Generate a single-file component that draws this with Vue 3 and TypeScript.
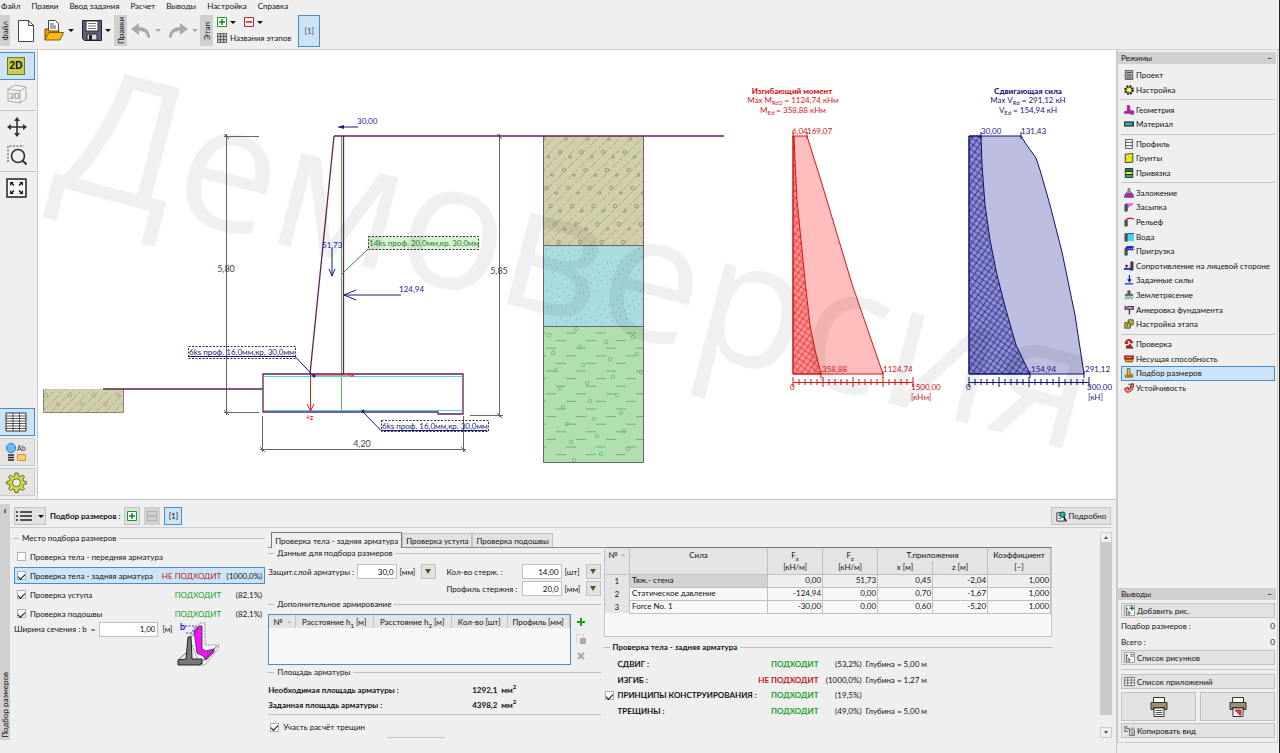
<script setup lang="ts">
import { ref } from 'vue'

interface NavItem { icon: string; label: string }
interface CheckRow { label: string; on: boolean; status: string; ok: boolean; percent: string }
interface ForceRow { n: number; name: string; values: string[] }
interface ResultRow { label: string; ok: boolean; status: string; percent: string; depth: string; check: boolean }

const menu = ['Файл', 'Правки', 'Ввод задания', 'Расчет', 'Выводы', 'Настройка', 'Справка']

const wall = '<path d="M1 11V3l2-2h7v1.500H5L4 4v7z" fill="#555" stroke="#222" stroke-width=".6"/>'
const icons: Record<string, string> = {
  project: '<path d="M1.500.500h9v11h-9z" fill="#b4b4b4" stroke="#444"/><path d="M3 3h6M3 9.500h6" stroke="#333"/><path d="M3 5h6v2.500H3z" fill="#777"/>',
  settings: '<circle cx="6" cy="6" r="4.800" fill="none" stroke="#222" stroke-width="2.200" stroke-dasharray="2.200 1.570"/><circle cx="6" cy="6" r="3.700" fill="#e8e21c" stroke="#222"/><circle cx="6" cy="6" r="1.500" fill="#f8f8e0"/>',
  geometry: '<path d="M4 .5h2.500L7.200 7h4.300v4H8v-1H.5V8L4 7.500z" fill="#d010d0" stroke="#401040" stroke-width=".6"/>',
  material: '<path d="M0 3.500h12v5H0z" fill="#367" stroke="#222"/><path d="M1.500 6h8" stroke="#30c8c8" stroke-width="2"/>',
  profile: '<path d="M2 .5h8v11H2zM2 4h8M2 8h8" fill="#fff" stroke="#333"/>',
  soils: '<path d="M1.500 1.500 10.500.5V11l-9 .5z" fill="#f2e81c" stroke="#222"/><path d="M5 4h1M7 6h1M4 8h1" stroke="#b09000"/>',
  assign: '<path d="M1.500.500h9v3.700h-9z" fill="#167a50" stroke="#123"/><path d="M1.500 4.200h9v3.600h-9z" fill="#f2e81c" stroke="#222"/><path d="M1.500 7.800h9v3.700h-9z" fill="#20a890" stroke="#123"/>',
  foundation: '<path d="M5 .5h2V4l2 1v2H3V5l2-1z" fill="#999" stroke="#444" stroke-width=".6"/><path d="M1.500 7h9l1.200 4.300H.3z" fill="#c020c0" stroke="#333" stroke-width=".6"/>',
  backfill: '<path d="M4 1.500h8L9 4.500 6 6l-2 4z" fill="#f060e8"/><path d="M1 11V3l3-1v9z" fill="#555" stroke="#222" stroke-width=".6"/>',
  terrain: '<path d="M1 11V4h3v7z" fill="#555" stroke="#222" stroke-width=".6"/><path d="M2 4 5 1.500h4l3 1" fill="none" stroke="#b02030" stroke-width="1.500"/>',
  water: '<path d="M4 3h8v8H4z" fill="#35dcf0"/><path d="M4 2h8" stroke="#1040c0" stroke-width="1.400"/><path d="M1 11V2h3v9z" fill="#555" stroke="#222" stroke-width=".6"/>',
  surcharge: wall + '<path d="M3 1h9M3 4.500h9M5 1v4M7.500 1v4M10 1v4" stroke="#1818d8" stroke-width="1.300"/>',
  resist: '<path d="M8 1h3v10H7V8h1z" fill="#345" stroke="#222" stroke-width=".5"/><path d="M0 9.500h7" stroke="#1818d8" stroke-width="2"/><path d="M3 4v4M5 5l-2 3-1.500-3" stroke="#d02030"/>',
  forces: '<path d="M6.500 0v6.500M4.500 5l2 3 2-3" stroke="#1818d8" stroke-width="1.400" fill="none"/><path d="M1 9.500h10v2H1z" fill="#4060d0"/>',
  quake: '<path d="M4.500 1h3v4h3v2h-9V5h3z" fill="#666" stroke="#222" stroke-width=".5"/><path d="m1 11 2-3 2 3 2-3 2 3 2-3" fill="none" stroke="#189840"/>',
  anchor: '<path d="M1.500 1v4H11V2H6L3 3M6.500 5v6.500" fill="none" stroke="#542060" stroke-width="1.600"/>',
  stage: '<path d="M5 1h6v6H5z" fill="#c8c832" stroke="#333"/><path d="M1 4.500h6.500V11H1z" fill="#c8c832" stroke="#333"/><path d="M4 6v3.500" stroke="#333"/>',
  verify: '<path d="M2 6C2 0 8 0 9 4M1 5h4M7 4h4" fill="none" stroke="#c81820" stroke-width="2.200"/><path d="M3 11V8h3l1-2 4 5z" fill="#c81820" stroke="#311" stroke-width=".7"/>',
  bearing: '<path d="M.5 2h11v4H.5z" fill="#c81820" stroke="#411" stroke-width=".5"/><path d="M1 6.500h10l-1 3H2z" fill="#e8a820" stroke="#411" stroke-width=".7"/><path d="M2 4h7" stroke="#f2d060"/>',
  sizing: '<path d="M4 .5h3V7l3.500 1v3h-9V8.500L4 8z" fill="#f0c818" stroke="#432" stroke-width=".8"/><path d="M4 9.500h5" stroke="#c02018" stroke-width="1.500"/>',
  stability: '<path d="M.5 7 5 5v3l2-1 2-6h2.500C12 7 8 12 3 11z" fill="#f0a090" stroke="#901818" stroke-width="1.200"/><path d="M5 1.500h4M7 7l3-4" stroke="#801818"/>',
  addpic: '<path d="M.5.500h11v11H.5z" fill="#fff" stroke="#999"/><path d="M2.500 2v8h4V8h-2V6M2.500 4h2" fill="none" stroke="#444"/><path d="M8.500 1v5M6 3.500h5" stroke="#108828" stroke-width="1.500"/>',
  pics: '<path d="M.5.500h11v11H.5z" fill="#fff" stroke="#999"/><path d="M2.500 2v8h4V8h-2V6M2.500 4h2" fill="none" stroke="#444"/><path d="M6.500 2.500h4.500M6.500 4.500h4.500" stroke="#666"/>',
  grid: '<path d="M.5 1.500h11v9H.5zM4 1.500v9M8 1.500v9M.5 4.500h11M.5 7.500h11" fill="#f8f8f8" stroke="#555" stroke-width=".8"/>',
  stages: '<path d="M.5.500h11v11H.5z" fill="#ccc" stroke="#444"/><path d="M4 1v10M8 1v10M1 4h10M1 8h10" stroke="#444"/>',
  copy: '<path d="M1 1v6h3M3 1v3h3v3" fill="none" stroke="#555"/><path d="M6 5.500h5.500v6H6z" fill="#e8e8e8" stroke="#666"/><path d="M8 3.500h3M7.500 8h3M7.500 10h3" stroke="#208838"/>',
  detail: '<path d="M1 2h8v9H1z" fill="#fff" stroke="#222"/><path d="M2.500 5h3M2.500 8h3" stroke="#444"/><circle cx="7" cy="4" r="3" fill="#20b8a8" stroke="#134"/><path d="m8.500 6.500 3 5" stroke="#222" stroke-width="1.600"/>',
}

const navGroups: NavItem[][] = [
  [{ icon: 'project', label: 'Проект' }, { icon: 'settings', label: 'Настройка' }],
  [{ icon: 'geometry', label: 'Геометрия' }, { icon: 'material', label: 'Материал' }],
  [{ icon: 'profile', label: 'Профиль' }, { icon: 'soils', label: 'Грунты' }, { icon: 'assign', label: 'Привязка' }],
  [
    { icon: 'foundation', label: 'Заложение' }, { icon: 'backfill', label: 'Засыпка' },
    { icon: 'terrain', label: 'Рельеф' }, { icon: 'water', label: 'Вода' },
    { icon: 'surcharge', label: 'Пригрузка' }, { icon: 'resist', label: 'Сопротивление на лицевой стороне' },
    { icon: 'forces', label: 'Заданные силы' }, { icon: 'quake', label: 'Землетрясение' },
    { icon: 'anchor', label: 'Анкеровка фундамента' }, { icon: 'stage', label: 'Настройка этапа' },
  ],
  [
    { icon: 'verify', label: 'Проверка' }, { icon: 'bearing', label: 'Несущая способность' },
    { icon: 'sizing', label: 'Подбор размеров' }, { icon: 'stability', label: 'Устойчивость' },
  ],
]
const activeMode = ref('Подбор размеров')

const checks = ref<CheckRow[]>([
  { label: 'Проверка тела - передняя арматура', on: false, status: '', ok: true, percent: '' },
  { label: 'Проверка тела - задняя арматура', on: true, status: 'НЕ ПОДХОДИТ', ok: false, percent: '(1000,0%)' },
  { label: 'Проверка уступа', on: true, status: 'ПОДХОДИТ', ok: true, percent: '(82,1%)' },
  { label: 'Проверка подошвы', on: true, status: 'ПОДХОДИТ', ok: true, percent: '(82,1%)' },
])
const activeCheck = ref(1)
const width = ref('1,00')
const cover = ref('30,0')
const barCount = ref('14,00')
const barSize = ref('20,0')
const cracks = ref(true)
const principles = ref(true)

const tabs = ['Проверка тела - задняя арматура', 'Проверка уступа', 'Проверка подошвы']
const activeTab = ref(0)

const forces: ForceRow[] = [
  { n: 1, name: 'Тяж.- стена', values: ['0,00', '51,73', '0,45', '-2,04', '1,000'] },
  { n: 2, name: 'Статическое давление', values: ['-124,94', '0,00', '0,70', '-1,67', '1,000'] },
  { n: 3, name: 'Force No. 1', values: ['-30,00', '0,00', '0,60', '-5,20', '1,000'] },
]
const results: ResultRow[] = [
  { label: 'СДВИГ :', ok: true, status: 'ПОДХОДИТ', percent: '(53,2%)', depth: 'Глубина = 5,00 м', check: false },
  { label: 'ИЗГИБ :', ok: false, status: 'НЕ ПОДХОДИТ', percent: '(1000,0%)', depth: 'Глубина = 1,27 м', check: false },
  { label: 'ПРИНЦИПЫ КОНСТРУИРОВАНИЯ :', ok: true, status: 'ПОДХОДИТ', percent: '(19,5%)', depth: '', check: true },
  { label: 'ТРЕЩИНЫ :', ok: true, status: 'ПОДХОДИТ', percent: '(49,0%)', depth: 'Глубина = 5,00 м', check: false },
]

// Soil hatches
const siltLines = Array.from({ length: 22 }, (_, i) => ({ x: 434 + i * 11 }))
const siltMarks: { x: number; y: number; r: number }[] = []
for (let row = 0; row < 7; row++) {
  for (let col = -2; col < 6; col++) {
    siltMarks.push({ x: 560 + row * 4 + col * 21.500, y: 152 + row * 18, r: 1.800 })
    siltMarks.push({ x: 566 + row * 4 + col * 21.500, y: 139 + row * 18, r: 1.300 })
  }
}
const sandDots: { x: number; y: number }[] = []
for (let i = 0; i < 130; i++) {
  sandDots.push({ x: 546 + ((i * 37) % 97), y: 249 + ((i * 23 + Math.floor(i / 7) * 5) % 76) })
}
const clayDashes: { x: number; y: number }[] = []
for (let row = 0; row < 17; row++) {
  for (let col = -1; col < 5; col++) {
    clayDashes.push({ x: 566 + col * 30 - (row % 3) * 10, y: 333 + row * 7.600 })
  }
}
const clayStones = [
  [549, 335], [606, 342], [580, 347], [553, 353], [610, 359], [637, 354], [583, 365], [556, 370], [613, 377],
  [587, 383], [560, 388], [617, 395], [590, 401], [563, 407], [621, 413], [594, 419], [567, 424], [624, 431],
  [597, 436], [571, 442], [628, 449], [601, 454], [574, 460], [576, 329], [633, 337], [641, 372],
]
const ticks = Array.from({ length: 21 }, (_, i) => ({ dx: i * 6, h: i % 5 === 0 ? 5 : 3 }))
const tickPath = (x0: number) => ticks.map(t => `M${x0 + t.dx} ${382 - t.h}v${t.h * 2}`).join('')
</script>

<template>
  <div class="app">
    <nav class="menu">
      <a v-for="m in menu" :key="m" href="#">{{ m }}</a>
    </nav>

    <header class="toolbar">
      <span class="vtab first"><span>Файл</span></span>
      <button class="tool new" aria-label="Новый">
        <svg width="16" height="22" viewBox="0 0 16 22"><path d="M.5.500h10l5 5v16H.5z" fill="#fff" stroke="#444" /><path d="M10.500.500v5h5" fill="none" stroke="#444" /></svg>
      </button>
      <button class="tool open" aria-label="Открыть">
        <svg width="20" height="21" viewBox="0 0 20 21"><path d="M4.500.500h7l3 3V13h-10z" fill="#fff" stroke="#444" /><path d="M6 4h4M6 6h6M6 8h6" stroke="#555" /><path d="M1 20V9h3l1 2h10v3" fill="#e89c08" stroke="#6a4a00" /><path d="M1 20 5 12.500h14.500L16 20z" fill="#fdbb18" stroke="#8a5a00" /></svg>
      </button>
      <button class="drop" aria-label="Недавние файлы"><i class="caret"></i></button>
      <button class="tool save" aria-label="Сохранить">
        <svg width="20" height="21" viewBox="0 0 20 21"><path d="M.5.500h19v20H2.500l-2-2z" fill="#5e5e7e" stroke="#222" /><path d="M4 1h12v10H4z" fill="#fff" stroke="#333" /><path d="M6 3.500h8M6 6h8M6 8.500h8" stroke="#777" /><path d="M5 14h10v6H5z" fill="#ddd" stroke="#222" /><path d="M7 15h3v5H7z" fill="#223" /></svg>
      </button>
      <button class="drop" aria-label="Варианты сохранения"><i class="caret"></i></button>
      <span class="vtab"><span>Правки</span></span>
      <button class="tool undo" aria-label="Отменить">
        <svg width="20" height="16" viewBox="0 0 20 16"><path d="M0 6 8 0v4c7 0 11 4 11 11l-3-1c0-4-3-6-8-6v4z" fill="#a9a9a9" /></svg>
      </button>
      <button class="drop" aria-label="История отмен"><i class="caret dim"></i></button>
      <button class="tool redo" aria-label="Повторить">
        <svg width="20" height="16" viewBox="0 0 20 16"><path d="m20 6-8-6v4C5 4 1 8 1 15l3-1c0-4 3-6 8-6v4z" fill="#a9a9a9" /></svg>
      </button>
      <button class="drop" aria-label="История повторов"><i class="caret dim"></i></button>
      <span class="vtab stage"><span>Этап</span></span>
      <div class="stagebox">
        <div class="stagebtns">
          <button class="bare" aria-label="Добавить этап"><svg width="10" height="10" viewBox="0 0 10 10"><path d="M.5.500h9v9h-9z" fill="#fff" stroke="#189828" /><path d="M5 2v6M2 5h6" stroke="#108820" stroke-width="1.500" /></svg></button>
          <i class="caret"></i>
          <button class="bare second" aria-label="Удалить этап"><svg width="10" height="10" viewBox="0 0 10 10"><path d="M.5.500h9v9h-9z" fill="#fff" stroke="#c02028" /><path d="M2 5h6" stroke="#b81820" stroke-width="1.500" /></svg></button>
          <i class="caret"></i>
        </div>
        <button class="bare names"><svg width="10" height="10" viewBox="0 0 12 12" v-html="icons.stages"></svg>Названия этапов</button>
      </div>
      <button class="stagetab">[1]</button>
    </header>

    <aside class="left">
      <button class="side on" aria-label="2D"><span class="two">2D</span></button>
      <button class="side flat" aria-label="3D">
        <svg width="20" height="20" viewBox="0 0 20 20"><path d="M1 5 8 1l11 2v12l-6 4-12-2z" fill="#f3f3f3" stroke="#aaa" /><path d="m1 5 12 2v12M13 7l6-4" fill="none" stroke="#aaa" /><text x="2" y="15" font-size="8" font-weight="700" fill="#999">3D</text></svg>
      </button>
      <hr>
      <button class="side flat" aria-label="Сдвиг">
        <svg width="20" height="20" viewBox="0 0 20 20"><path d="M10 1v18M1 10h18" stroke="#333" stroke-width="1.600" /><path d="m10 0 3 4H7zM10 20l3-4H7zM0 10l4-3v6zM20 10l-4-3v6z" fill="#333" /></svg>
      </button>
      <button class="side flat" aria-label="Увеличить область">
        <svg width="20" height="20" viewBox="0 0 20 20"><path d="M1 17V1h16" fill="none" stroke="#444" stroke-dasharray="2 1.500" /><circle cx="11" cy="11" r="6.500" fill="none" stroke="#333" stroke-width="1.600" /><path d="m15.500 15.500 4 4" stroke="#333" stroke-width="2" /></svg>
      </button>
      <hr>
      <button class="side flat" aria-label="Показать всё">
        <svg width="21" height="20" viewBox="0 0 21 20"><path d="M1 1h19v18H1z" fill="#f8f8f8" stroke="#222" stroke-width="1.500" /><path d="M4 4h4L6.700 5.300 8.500 7l-1 1-2-1.700L4 8zM17 4h-4l1.300 1.300L12.500 7l1 1 2-1.700L17 8zM4 16h4l-1.300-1.300L8.500 13l-1-1-2 1.700L4 12zM17 16h-4l1.300-1.300-1.800-1.700 1-1 2 1.700L17 12z" fill="#222" /></svg>
      </button>
      <div class="grow"></div>
      <button class="side on" aria-label="Таблица">
        <svg width="22" height="20" viewBox="0 0 22 20"><path d="M1 1h20v18H1z" fill="#fff" stroke="#333" /><path d="M1 4h20M1 6.500h20M1 9h20M1 11.500h20M1 14h20M1 16.500h20M8 1v18M14.500 1v18" stroke="#444" stroke-width=".9" /></svg>
      </button>
      <button class="side box" aria-label="Подписи">
        <svg width="20" height="20" viewBox="0 0 20 20"><circle cx="5" cy="6" r="4.600" fill="#6cb8f0" stroke="#3a80b8" /><path d="M2 13h6M2 15.500h6M2 18h6" stroke="#222" stroke-width="1.300" /><path d="M11.500 12.500h8v6h-8z" fill="#fcd078" stroke="#e09020" /><text x="11" y="9" font-size="7" fill="#333">Ab</text></svg>
      </button>
      <button class="side box" aria-label="Настройка">
        <svg width="21" height="21" viewBox="0 0 21 21"><path d="M9 1h3l.5 3 1.700.700L16.700 3 18.500 5l-1.700 2.300.7 1.700 2.800.5v2.500l-2.800.500-.7 1.700 1.700 2.500-2 2-2.300-1.700-1.700.700-.5 2.800H9l-.5-2.800-1.700-.700L4.500 18.500l-2-2 1.700-2.500-.7-1.700L.7 12V9.500L3.500 9l.7-1.700L2.500 5l2-2 2.300 1.700L8.500 4z" fill="#d3d84e" stroke="#666a20" /><circle cx="10.500" cy="10.700" r="4" fill="#efefef" stroke="#666a20" /></svg>
      </button>
    </aside>

    <main class="canvas">
      <svg class="drawing" viewBox="38 50 1078 449" role="img" aria-label="Подпорная стена">
        <defs>
          <pattern id="hatchRed" width="5" height="5" patternUnits="userSpaceOnUse" patternTransform="rotate(35)">
            <path d="M0 0h5M0 0v5" stroke="#e01818" stroke-width="1.200" />
          </pattern>
          <pattern id="hatchBlue" width="5" height="5" patternUnits="userSpaceOnUse" patternTransform="rotate(35)">
            <path d="M0 0h5M0 0v5" stroke="#101070" stroke-width="1.200" />
          </pattern>
          <clipPath id="silt"><path d="M544 136h100v110H544z" /></clipPath>
          <clipPath id="clay"><path d="M544 327h100v136H544z" /></clipPath>
          <clipPath id="ground"><path d="M43 389h81v23H43z" /></clipPath>
        </defs>

        <!-- soil profile -->
        <path d="M544 136h100v110H544z" fill="#d0ceab" />
        <g clip-path="url(#silt)" stroke="#9d9c78" fill="none" stroke-width=".7">
          <path v-for="l in siltLines" :key="l.x" :d="`M${l.x} 247l111-111`" stroke-dasharray="9 2 3 2" />
          <circle v-for="(m, i) in siltMarks" :key="'m' + i" :cx="m.x" :cy="m.y" :r="m.r" stroke="#85845c" />
        </g>
        <path d="M544 246h100v81H544z" fill="#a9dcdf" />
        <path v-for="(d, i) in sandDots" :key="'s' + i" :d="`M${d.x} ${d.y}h1`" stroke="#6ba5b0" />
        <path d="M544 327h100v136H544z" fill="#b0e0b0" />
        <g clip-path="url(#clay)" stroke="#6fb374" fill="none">
          <path v-for="(d, i) in clayDashes" :key="'c' + i" :d="`M${d.x} ${d.y}h10`" />
          <circle v-for="(s, i) in clayStones" :key="'k' + i" :cx="s[0]" :cy="s[1]" r="1.800" stroke-width=".8" />
        </g>
        <path d="M543.500 136v326.500h100V136M543.500 245.500h100M543.500 326.500h100" fill="none" stroke="#6f5f78" />
        <path d="M43 389h81v23H43z" fill="#d0ceab" />
        <g clip-path="url(#ground)" stroke="#9d9c78" fill="none" stroke-width=".7">
          <path v-for="k in 12" :key="k" :d="`M${14 + k * 9} 413l25-25`" stroke-dasharray="9 2 3 2" />
          <circle v-for="k in 7" :key="'g' + k" :cx="34 + k * 12" :cy="k % 2 ? 395 : 404" r="1.800" />
        </g>
        <path d="M43.500 389v23.500h80V389" fill="none" stroke="#8c7f80" />

        <!-- diagrams -->
        <path d="M793 136h14l15 48 30 100 31 90h-90z" fill="#ffbdbd" />
        <path d="M793 136h1l1 24 2 40 5 50 4 40 4 35 5 25 6 24h-28z" fill="#ff9090" />
        <path d="M793 136h1l1 24 2 40 5 50 4 40 4 35 5 25 6 24h-28z" fill="url(#hatchRed)" stroke="#d01818" />
        <path d="M793 136h14l15 48 30 100 31 90h-90z" fill="none" stroke="#d01818" />
        <path d="M969 136h52l5 8 10 14 4 12 10 35 12 47 13 63 9 59H969z" fill="#bdbddf" />
        <path d="M969 136h12l1 29 3 40 5 35 7 35 9 35 10 35 14 29H969z" fill="#8c8cd0" />
        <path d="M969 136h12l1 29 3 40 5 35 7 35 9 35 10 35 14 29H969z" fill="url(#hatchBlue)" stroke="#101078" />
        <path d="M969 136h52l5 8 10 14 4 12 10 35 12 47 13 63 9 59H969z" fill="none" stroke="#101078" />
        <path :d="'M793 382.500h120' + tickPath(793) + 'M793 132v7M807 132v7M821 371v7M883 371v7'" stroke="#d01818" />
        <path :d="'M969 382.500h120' + tickPath(969) + 'M981 132v7M1021 132v7M1030 371v7M1084 371v7'" stroke="#101078" />
        <g class="red">
          <text x="792" y="94" text-anchor="middle" class="b">Изгибающий момент</text>
          <text x="793" y="103" text-anchor="middle">Max M<tspan class="sub" dy="2">Rd2</tspan><tspan dy="-2"> = 1124,74 кНм</tspan></text>
          <text x="793" y="113" text-anchor="middle">M<tspan class="sub" dy="2">Ed</tspan><tspan dy="-2"> = 358,88 кНм</tspan></text>
          <text x="792" y="134">6,04</text><text x="807" y="134">169,07</text>
          <text x="822" y="372">358,88</text><text x="883" y="372">1124,74</text>
          <text x="790" y="390">0</text><text x="911" y="390">1500,00</text><text x="911" y="400">[кНм]</text>
        </g>
        <g class="blue">
          <text x="1028" y="94" text-anchor="middle" class="b">Сдвигающая сила</text>
          <text x="1028" y="103" text-anchor="middle">Max V<tspan class="sub" dy="2">Rd</tspan><tspan dy="-2"> = 291,12 кН</tspan></text>
          <text x="1028" y="113" text-anchor="middle">V<tspan class="sub" dy="2">Ed</tspan><tspan dy="-2"> = 154,94 кН</tspan></text>
          <text x="981" y="134">30,00</text><text x="1021" y="134">131,43</text>
          <text x="1031" y="372">154,94</text><text x="1085" y="372">291,12</text>
          <text x="966" y="390">0</text><text x="1087" y="390">300,00</text><text x="1088" y="400">[кН]</text>
        </g>

        <!-- dimensions -->
        <g stroke="#666" fill="none">
          <path d="M226.500 134v281M224 136.500h35M224 412.500h35M499.500 134v283M470 415.500h33M260 449.500h206M262.500 416v36M463.500 416v36" />
          <path d="m224 134 5 5M224 410l5 5M497 134l5 5M497 413l5 5M260 447l5 5M461 447l5 5" />
        </g>
        <g class="dim" text-anchor="middle">
          <text x="226" y="272">5,80</text><text x="499" y="274">5,85</text><text x="362" y="447">4,20</text>
        </g>

        <!-- wall -->
        <path d="M341.500 136v276" stroke="#57b857" />
        <path d="M264 376.500h198M264 410.500h198" stroke="#45d5ef" />
        <g fill="none" stroke="#5c2458" stroke-width="1.300">
          <path d="M334 136h390M334 136l-24 238M343.500 136v238M103 389h160" />
          <path d="M263 374h200v40h-25v-2H263z" />
        </g>
        <path d="M310.500 375v36M307 404l3.500 7 3.500-7M311 375h42" stroke="#e02020" fill="none" />
        <g class="axis"><text x="347" y="377">+x</text><text x="306" y="420">+z</text></g>

        <!-- loads -->
        <path d="M338 127h20M332 248v28m-3-7 3 7 3-7M344 295h57M356 290l-12 5 12 5" fill="none" stroke="#181880" />
        <path d="m338 127 6-2v4z" fill="#181880" />
        <g class="load">
          <text x="357" y="124">30,00</text><text x="322" y="248">51,73</text><text x="399" y="292">124,94</text>
        </g>
        <path d="M368.500 236.500h110v13h-110z" fill="#d9f2d5" stroke="#333" stroke-dasharray="2 1.500" />
        <path d="M342 274l26-25" stroke="#2c8c2c" />
        <text x="369" y="246" class="green">14ks проф. 20,0мм,кр. 30,0мм</text>
        <path d="M188.500 346.500h107v12h-107zM381.500 420.500h107v11h-107z" fill="none" stroke="#333" stroke-dasharray="2 1.500" />
        <path d="M189 356.500h106l19 20M363 412l18 18.500h106" fill="none" stroke="#181880" />
        <circle cx="314" cy="376" r="1.500" fill="#181880" /><circle cx="363" cy="411" r="1.500" fill="#181880" />
        <g class="blue"><text x="189" y="355">6ks проф. 16,0мм,кр. 30,0мм</text><text x="382" y="429">6ks проф. 16,0мм,кр. 30,0мм</text></g>

        <text class="mark" transform="translate(50 185) rotate(14.6)">Демоверсия</text>
      </svg>
    </main>

    <section class="bottom">
      <div class="strip"><b>ı</b><span>Подбор размеров</span></div>
      <div class="work">
        <div class="bar">
          <button class="gray list" aria-label="Список"><svg width="16" height="10" viewBox="0 0 16 10"><path d="M0 1h2M0 5h2M0 9h2M4 1h12M4 5h12M4 9h12" stroke="#222" stroke-width="1.600" /></svg><i class="caret"></i></button>
          <b>Подбор размеров :</b>
          <button class="gray sq" aria-label="Добавить"><svg width="10" height="10" viewBox="0 0 10 10"><path d="M.5.500h9v9h-9z" fill="#fff" stroke="#189828" /><path d="M5 2v6M2 5h6" stroke="#108820" stroke-width="1.500" /></svg></button>
          <button class="gray sq off" aria-label="Удалить" disabled><svg width="10" height="10" viewBox="0 0 10 10"><path d="M.5.500h9v9h-9z" fill="none" stroke="#b0b0b0" /><path d="M2 5h6" stroke="#aaa" stroke-width="1.500" /></svg></button>
          <button class="gray one">[1]</button>
          <button class="gray detail"><svg width="11" height="11" viewBox="0 0 12 12" v-html="icons.detail"></svg>Подробно</button>
        </div>

        <div class="cols">
          <div class="col place">
            <h3 class="legend">Место подбора размеров</h3>
            <div v-for="(c, i) in checks" :key="c.label" class="check" :class="{ active: i === activeCheck }">
              <label><input v-model="c.on" type="checkbox">{{ c.label }}</label>
              <span class="status" :class="c.ok ? 'ok' : 'bad'">{{ c.status }}</span>
              <span class="pct">{{ c.percent }}</span>
            </div>
            <div class="widthrow">
              <label for="width">Ширина сечения : b&nbsp; =</label>
              <input id="width" v-model="width" class="num" type="text">
              <span>[м]</span>
              <svg width="44" height="45" viewBox="0 0 44 45">
                <path d="M12 15 23 1h5v22h14l-1 4-13 16h-5z" fill="#f4f4f4" stroke="#777" stroke-width=".8" stroke-dasharray="2 1" />
                <path d="m17 9 5-5h3v23l4 2 8-2v3l-8 8-3-4-6-3z" fill="#f018f0" stroke="#402040" stroke-width=".8" />
                <path d="M11 15h3l1 22h10v5h-2v1H1v-5l8-1z" fill="#777" stroke="#222" />
                <path d="m1 38 8-7M26 39l14-15M14 15l8-9" stroke="#444" stroke-width=".8" />
                <path d="M9 11h5l5-7M8 4h12" fill="none" stroke="#3030d0" stroke-dasharray="2 1.500" />
                <text x="3" y="8" font-size="9" font-weight="700" fill="#1818d0">b</text>
              </svg>
            </div>
          </div>

          <div class="col middle">
            <div class="tabs">
              <button v-for="(t, i) in tabs" :key="t" :class="{ active: i === activeTab }" @click="activeTab = i">{{ t }}</button>
            </div>
            <h3 class="legend data">Данные для подбора размеров</h3>
            <div class="fields">
              <label for="cover">Защит.слой арматуры :</label>
              <input id="cover" v-model="cover" class="num" type="text">
              <span>[мм]</span><button class="pick" aria-label="Выбрать слой"><i></i></button>
              <label for="count">Кол-во стерж. :</label>
              <input id="count" v-model="barCount" class="num" type="text">
              <span>[шт]</span><button class="pick" aria-label="Выбрать количество"><i></i></button>
              <label for="size" class="later">Профиль стержня :</label>
              <input id="size" v-model="barSize" class="num" type="text">
              <span>[мм]</span><button class="pick" aria-label="Выбрать профиль"><i></i></button>
            </div>
            <h3 class="legend extra">Дополнительное армирование</h3>
            <div class="extras">
              <div class="extrabox">
                <table>
                  <colgroup><col class="e1"><col class="e2"><col class="e2"><col class="e3"><col></colgroup>
                  <thead><tr><th>№ <i class="sort"></i></th><th>Расстояние h<sub>1</sub> [м]</th><th>Расстояние h<sub>2</sub> [м]</th><th>Кол-во [шт]</th><th>Профиль [мм]</th></tr></thead>
                </table>
              </div>
              <div class="ops">
                <button class="bare" aria-label="Добавить строку"><svg width="10" height="10" viewBox="0 0 10 10"><path d="M5 1v8M1 5h8" stroke="#18a018" stroke-width="2" /></svg></button>
                <button class="bare" aria-label="Копировать строку"><svg width="10" height="10" viewBox="0 0 10 10"><path d="M.5.500h7v7h-7z" fill="none" stroke="#bbb" stroke-dasharray="1 1" /><path d="M4 4h6v6H4z" fill="#aaa" /></svg></button>
                <button class="bare" aria-label="Удалить строку"><svg width="10" height="10" viewBox="0 0 10 10"><path d="m2 2 6 6M8 2 2 8" stroke="#a8a8a8" stroke-width="2" /></svg></button>
              </div>
            </div>
            <h3 class="legend area">Площадь арматуры</h3>
            <dl>
              <dt>Необходимая площадь арматуры :</dt><dd>1292,1</dd><dd>мм<sup>2</sup></dd>
              <dt>Заданная площадь арматуры :</dt><dd>4398,2</dd><dd>мм<sup>2</sup></dd>
            </dl>
            <label class="cracks"><input v-model="cracks" type="checkbox">Участь расчёт трещин</label>
            <div class="grip"></div>
          </div>

          <div class="col right">
            <div class="forcebox">
              <table class="forces">
                <colgroup><col class="c1"><col class="c2"><col class="c3"><col class="c3"><col class="c3"><col class="c3"><col class="c4"></colgroup>
                <thead>
                  <tr><th>№ <i class="sort"></i></th><th>Сила</th><th>F<sub>x</sub></th><th>F<sub>z</sub></th><th colspan="2">Т.приложения</th><th>Коэффициент</th></tr>
                  <tr class="units"><th></th><th></th><th>[кН/м]</th><th>[кН/м]</th><th>x [м]</th><th>z [м]</th><th>[–]</th></tr>
                </thead>
                <tbody>
                  <tr v-for="(f, i) in forces" :key="f.n" :class="{ sel: i === 0 }">
                    <th>{{ f.n }}</th><td class="name">{{ f.name }}</td><td v-for="(v, k) in f.values" :key="k">{{ v }}</td>
                  </tr>
                </tbody>
              </table>
            </div>
            <h3 class="legend bold">Проверка тела - задняя арматура</h3>
            <div class="results">
              <div v-for="r in results" :key="r.label" class="result">
                <label><input v-if="r.check" v-model="principles" type="checkbox"><i v-else></i>{{ r.label }}</label>
                <b :class="r.ok ? 'ok' : 'bad'">{{ r.status }}</b>
                <span class="p">{{ r.percent }}</span>
                <span>{{ r.depth }}</span>
              </div>
            </div>
          </div>

          <div class="scroll">
            <button aria-label="Вверх"><i class="up"></i></button>
            <div class="track"><div class="thumb"></div></div>
            <button aria-label="Вниз"><i class="down"></i></button>
          </div>
        </div>
      </div>
    </section>

    <aside class="modes">
      <h2>Режимы<span>–</span></h2>
      <nav>
        <template v-for="(g, gi) in navGroups" :key="gi">
          <hr v-if="gi">
          <a v-for="n in g" :key="n.label" href="#" :class="{ active: n.label === activeMode }" @click.prevent="activeMode = n.label">
            <svg width="10" height="10" viewBox="0 0 12 12" v-html="icons[n.icon]"></svg>{{ n.label }}
          </a>
        </template>
      </nav>
      <div class="grow"></div>
      <h2>Выводы<span>–</span></h2>
      <div class="outputs">
        <button class="gray"><svg width="11" height="11" viewBox="0 0 12 12" v-html="icons.addpic"></svg>Добавить рис.</button>
        <p><span>Подбор размеров :</span><span>0</span></p>
        <p><span>Всего :</span><span>0</span></p>
        <button class="gray"><svg width="11" height="11" viewBox="0 0 12 12" v-html="icons.pics"></svg>Список рисунков</button>
        <hr>
        <button class="gray"><svg width="11" height="11" viewBox="0 0 12 12" v-html="icons.grid"></svg>Список приложений</button>
        <div class="printers">
          <button v-for="p in 2" :key="p" class="gray" :aria-label="p === 1 ? 'Печать документа' : 'Печать вида'">
            <svg width="18" height="20" viewBox="0 0 18 20"><path d="M3.500.500h11V6h-11z" fill="#fff" stroke="#333" /><path d="M1 5.500h16v7H1z" fill="#a09070" stroke="#333" /><path d="M3 11h12" stroke="#222" stroke-width="1.500" /><path d="M4 11h10v8.500H4z" fill="#fff" stroke="#333" /><path v-if="p === 1" d="M5.500 13.500h7M5.500 15.500h7M5.500 17.500h7" stroke="#555" /><path v-else d="M6 13h6v5h-1.500z" fill="#e04040" stroke="#c02020" /></svg>
          </button>
        </div>
        <button class="gray"><svg width="11" height="11" viewBox="0 0 12 12" v-html="icons.copy"></svg>Копировать вид</button>
      </div>
    </aside>
  </div>
</template>

<style>
body { margin: 0; background: #efefef; }
</style>

<style scoped>
* { box-sizing: border-box; }
.app {
  display: grid;
  grid-template-columns: 38px minmax(0, 1fr) 162px;
  grid-template-rows: 14px 36px minmax(0, 1fr) auto;
  min-height: 100vh;
  background: #efefef;
  border-right: 1px solid #222;
  color: #111;
  font: 8px/12px Lato, "Open Sans", sans-serif;
}
button, input { font: inherit; color: inherit; }
button { padding: 0; margin: 0; border: 0; background: none; display: flex; align-items: center; justify-content: center; }
a { color: inherit; text-decoration: none; }
h2, h3, p, dl, dd { margin: 0; font-weight: 400; font-size: 8px; }
dd { font-weight: 700; }
hr { width: 100%; height: 1px; margin: 0; border: 0; background: #c4c4c4; }
svg { display: block; flex: none; }
.grow { flex: 1; }
.ok { color: #18a02c; }
.bad { color: #c01424; }

.menu { grid-column: 1 / -1; display: flex; gap: 11px; padding-left: 1px; line-height: 12px; }
.toolbar { grid-column: 1 / -1; display: flex; align-items: center; border-bottom: 1px solid #d0d0d0; padding-bottom: 2px; }
.vtab { width: 13px; height: 31px; background: #d0d0d0; display: flex; align-items: center; justify-content: center; }
.vtab.first { width: 10px; }
.vtab span { writing-mode: vertical-rl; transform: rotate(180deg); line-height: 12px; }
.tool { height: 31px; }
.new { margin-left: 8px; }
.open { margin-left: 10px; }
.save { margin-left: 4px; }
.undo { margin-left: 4px; }
.redo { margin-left: 3px; }
.drop { width: 14px; height: 31px; }
.toolbar .save + .drop { width: 12px; }
.vtab.stage { margin-left: -2px; }
.caret { width: 0; height: 0; border: 3px solid transparent; border-top-color: #111; border-bottom: 0; }
.caret.dim { border-top-color: #aaa; }
.stagebox { margin-left: 4px; display: flex; flex-direction: column; align-items: flex-start; gap: 3px; }
.stagebtns { display: flex; align-items: center; gap: 3px; height: 12px; }
.second { margin-left: 5px; }
.names { gap: 3px; height: 14px; }
.stagetab { margin-left: 7px; width: 22px; height: 32px; border: 1px solid #4a8cc4; background: #cce4f7; color: #345; }

.left { grid-row: 3; display: flex; flex-direction: column; align-items: flex-start; padding: 2px 2px 3px 0; border-right: 1px solid #c8c8c8; }
.left hr { margin: 2px 0; width: 35px; }
.side { width: 35px; height: 28px; padding-right: 2px; flex: none; }
.side.on { border: 1px solid #4a8cc4; border-left: 0; background: #cce4f7; }
.side.box { margin-top: 2px; border: 1px solid #ccc; border-left: 0; background: #e4e4e4; }
.two { width: 18px; height: 18px; border: 1px solid #77772a; background: #c9cc4c; font: 700 10px/16px "Liberation Sans", sans-serif; color: #111; }

.canvas { grid-row: 3; grid-column: 2; background: #fff; border-right: 1px solid #c8c8c8; min-height: 0; }
.drawing { width: 100%; height: auto; font-size: 8px; }
.drawing .red { fill: #d01818; }
.drawing .blue { fill: #181880; }
.drawing .load { fill: #1c1ca8; }
.drawing .green { fill: #208020; }
.drawing .b { font-weight: 900; }
.drawing .sub { font-size: 6px; }
.drawing .dim { fill: #444; font-size: 9px; }
.drawing .axis { fill: #e02020; font-weight: 700; font-size: 7px; }
.drawing .mark { font-family: "Open Sans", sans-serif; font-size: 177px; fill: #000; fill-opacity: .06; }

.bottom { grid-row: 4; grid-column: 1 / 3; display: flex; border-top: 1px solid #c4c4c4; border-right: 1px solid #c8c8c8; padding: 4px 4px 13px 0; }
.strip { width: 10px; background: #d0d0d0; display: flex; flex-direction: column; justify-content: space-between; align-items: center; padding-bottom: 2px; }
.strip b { font-size: 8px; }
.strip span { writing-mode: vertical-rl; transform: rotate(180deg); line-height: 10px; white-space: nowrap; }
.work { flex: 1; min-width: 0; display: flex; flex-direction: column; }
.bar { display: flex; align-items: center; gap: 4px; padding: 3px 1px 2px 4px; border-bottom: 1px solid #ccc; }
.gray { border: 1px solid #c2c2c2; background: #e2e2e2; }
.list { width: 32px; height: 18px; gap: 6px; }
.sq { width: 16px; height: 18px; }
.sq.off { background: #d0d0d0; border-color: #d0d0d0; }
.one { width: 18px; height: 18px; background: #cce4f7; border-color: #4a8cc4; }
.detail { margin-left: auto; height: 18px; width: 60px; gap: 2px; }
.cols { flex: 1; display: grid; grid-template-columns: minmax(0, 252fr) minmax(0, 338fr) minmax(0, 448fr) minmax(0, 60fr); padding-left: 3px; }
.legend { display: flex; align-items: center; gap: 3px; height: 10px; line-height: 10px; white-space: nowrap; }
.legend::before { content: ""; width: 6px; height: 1px; background: #bdbdbd; }
.legend::after { content: ""; flex: 1; height: 1px; background: #bdbdbd; }
.legend.bold { font-weight: 700; }
.place { padding-top: 5px; }
.check { display: flex; align-items: center; height: 17px; margin-top: 2px; padding-right: 2px; margin-left: 1px; border: 1px solid transparent; }
.place .legend { margin-bottom: 5px; }
.check.active { border-color: #4a8cc4; background: #cce4f7; }
.check label { flex: 1; display: flex; align-items: center; white-space: nowrap; }
.check .pct { width: 41px; text-align: right; }
input[type="checkbox"] { appearance: none; width: 9px; height: 9px; margin: 0 4px 0 2px; border: 1px solid #b0b0b0; background: #fff; display: inline-flex; align-items: center; justify-content: center; flex: none; }
input[type="checkbox"]:checked::after { content: ""; width: 6px; height: 3px; border: solid #111; border-width: 0 0 1px 1px; transform: rotate(-45deg); }
.num { min-width: 0; height: 15px; border: 1px solid #c0c0c0; background: #fff; text-align: right; padding: 0 2px; border-radius: 0; }
.widthrow { display: flex; align-items: flex-start; gap: 4px; line-height: 15px; white-space: nowrap; padding-left: 1px; }
.widthrow .num { width: 59px; }

.middle { padding: 4px 3px 2px 3px; }
.tabs { display: flex; align-items: flex-end; padding-left: 3px; border-bottom: 1px solid #888; margin-right: -3px; }
.tabs button { height: 14px; padding: 0 3px; border: 1px solid #c2c2c2; border-bottom: 0; background: #e2e2e2; white-space: nowrap; }
.tabs .active { height: 16px; background: #efefef; border-color: #777; margin-bottom: -1px; }
.fields { display: grid; grid-template-columns: minmax(0, 1fr) 40px 18px 15px 80px 40px 18px 15px; gap: 2px 3px; align-items: center; margin-top: 6px; white-space: nowrap; }
.fields label:nth-of-type(n + 2) { padding-left: 8px; }
.fields .later { grid-column: 5; }
.pick { height: 15px; border: 1px solid #c2c2c2; background: #e2e2e2; }
.pick i { border: 3px solid transparent; border-top: 5px solid #55551a; border-bottom: 0; }
.extra { margin-top: 3px; }
.extras { display: flex; margin-top: 5px; gap: 5px; }
.extrabox { flex: 1; height: 51px; border: 1px solid #4a8cc4; background: #f8f8f8; }
table { border-collapse: collapse; width: 100%; table-layout: fixed; }
.e1 { width: 26px; }
.e2 { width: 78px; }
.e3 { width: 56px; }
th { font-weight: 400; padding: 0; }
sub, sup { font-size: 6px; line-height: 0; }
.extrabox th { height: 13px; line-height: 12px; background: #e4e4e4; border-right: 1px solid #c4c4c4; white-space: nowrap; }
.sort { display: inline-block; border: 2px solid transparent; border-bottom-color: #aaa; border-top: 0; vertical-align: middle; margin-left: 2px; }
.ops { width: 25px; display: flex; flex-direction: column; align-items: flex-start; gap: 7px; padding: 3px 0 0 0; }
.area { margin-top: 2px; }
dl { display: grid; grid-template-columns: 200px 25px 1fr; gap: 0 4px; font-weight: 700; line-height: 15px; padding: 6px 0 1px; border-bottom: 1px solid #c4c4c4; }
.cracks { display: flex; align-items: center; margin-top: 6px; }
.grip { width: 58px; height: 1px; background: #c4c4c4; margin: 4px 0 0 119px; }

.right { padding-top: 19px; }
.forcebox { height: 90px; border: 1px solid #c4c4c4; border-top-color: #777; background: #f8f8f8; }
.c1 { width: 25px; }
.c2 { width: 138px; }
.c3 { width: 55px; }
.c4 { width: 63px; }
.forces thead th { background: #e4e4e4; height: 13px; line-height: 12px; border-right: 1px solid #c0c0c0; }
.forces thead .units th { border-bottom: 1px solid #c0c0c0; }
.forces tbody th { background: #e4e4e4; border-right: 1px solid #c0c0c0; }
.forces td { text-align: right; border: 1px solid #c0c0c0; padding: 0 1px; height: 13px; line-height: 11px; }
.forces .name { text-align: left; padding-left: 2px; }
.forces .sel td { background: #efefef; }
.forces .sel .name { background: #d2d2d2; }
.right .legend { margin-top: 5px; }
.results { padding-top: 5px; line-height: 15px; }
.result { display: grid; grid-template-columns: 140px 74px 42px 1fr; gap: 0 1px; height: 15px; margin-bottom: 1px; white-space: nowrap; }
.result:nth-child(even) { margin-bottom: 0; }
.result label { font-weight: 700; display: flex; align-items: center; }
.result label input { margin-left: 1px; }
.result label i { width: 14px; }
.result b, .result .p { text-align: right; }
.result span:last-child { padding-left: 3px; }
.scroll { display: flex; flex-direction: column; width: 12px; margin: 4px 0 2px auto; }
.scroll button { height: 11px; border: 1px solid #ccc; }
.up { border: 2px solid transparent; border-bottom: 3px solid #555; border-top: 0; }
.down { border: 2px solid transparent; border-top: 3px solid #555; border-bottom: 0; }
.track { flex: 1; padding-bottom: 12px; display: flex; }
.thumb { flex: 1; background: #cacaca; }

.modes { grid-row: 3 / 5; grid-column: 3; margin: 0 1px 10px 0; padding: 2px 1px 4px 0; border: 1px solid #ccc; border-top: 0; display: flex; flex-direction: column; }
.modes h2 { display: flex; justify-content: space-between; background: #d0d0d0; height: 12px; line-height: 12px; padding: 0 4px 0 3px; }
.modes h2 span { font-weight: 700; }
.modes nav { display: flex; flex-direction: column; min-height: 327px; margin: 4px 1px 0 3px; }
.modes nav a { flex: 1; display: flex; align-items: center; gap: 2px; padding-left: 2px; border: 1px solid transparent; white-space: nowrap; line-height: 12px; }
.modes nav a.active { border-color: #4a8cc4; background: #cce4f7; }
.modes nav hr { margin: 2px 0; }
.outputs { display: flex; flex-direction: column; margin: 3px 1px 0 3px; }
.outputs > .gray { height: 15px; justify-content: flex-start; gap: 2px; padding-left: 2px; }
.outputs p { display: flex; justify-content: space-between; line-height: 16px; }
.outputs hr { margin: 4px 0; }
.printers { display: grid; grid-template-columns: 1fr 1fr; gap: 4px; margin: 3px 0 2px; }
.printers .gray { height: 29px; }
</style>
